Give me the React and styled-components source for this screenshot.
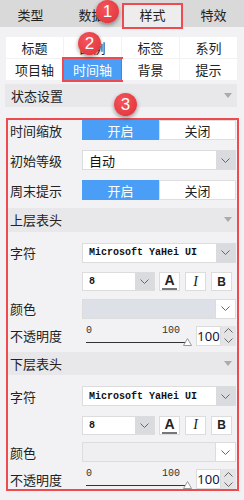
import React from 'react'
import styled, { createGlobalStyle } from 'styled-components'

const Global = createGlobalStyle`
  html, body {
    margin: 0;
    padding: 0;
    background: #f2f2f4;
  }
  body {
    font-family: "Noto Sans CJK SC", "Noto Sans", sans-serif;
    color: #222;
  }
`

const RED = '#ef4a4f'
const BLUE = '#4a9ef5'

const Page = styled.div`
  position: relative;
  width: 244px;
  height: 500px;
  overflow: hidden;
  background: #f2f2f4;
`

const TabBar = styled.div`
  display: grid;
  grid-template-columns: 61px 61px 61px 61px;
  height: 27px;
  background: #d9d9d9;
`

const Tab = styled.div`
  display: flex;
  align-items: center;
  justify-content: center;
  font-size: 13px;
  color: #222;
  box-sizing: border-box;
  ${p => p.$active && `
    margin-top: 3px;
    background: #ededed;
    border: 2px solid ${RED};
    padding-bottom: 3px;
  `}
`

const SubGrid = styled.div`
  display: grid;
  grid-template-columns: repeat(4, 57px);
  grid-auto-rows: 21px;
  gap: 1px;
  margin: 10px 0 0 6px;
  width: 231px;
`

const SubTab = styled.div`
  display: flex;
  align-items: center;
  justify-content: center;
  font-size: 13px;
  background: ${p => (p.$active ? BLUE : '#fff')};
  color: ${p => (p.$active ? '#fff' : '#222')};
  ${p => p.$active && `outline: 2px solid ${RED};`}
`

const Header = styled.div`
  display: flex;
  align-items: center;
  justify-content: space-between;
  height: ${p => p.$h || 24}px;
  margin-top: ${p => p.$mt || 0}px;
  padding: 0 5px 0 ${p => p.$pl || 2}px;
  background: #e8e8ea;
  font-size: 13px;
  color: #222;
`

const OuterHeader = styled(Header)`
  margin-left: 5px;
  margin-right: 7px;
`

const Caret = styled.span`
  width: 0;
  height: 0;
  border-left: 4px solid transparent;
  border-right: 4px solid transparent;
  border-top: 5px solid #ababab;
`

const Frame = styled.div`
  box-sizing: border-box;
  margin: 11px 0 0 6px;
  width: 233px;
  height: 373px;
  border: 2px solid ${RED};
  display: flex;
  flex-direction: column;
`

const Row = styled.div`
  display: flex;
  align-items: center;
  height: 20px;
  margin-top: ${p => p.$mt || 0}px;
  padding-right: 1px;
`

const Label = styled.div`
  width: 72px;
  padding-left: 2px;
  font-size: 13px;
  color: #222;
  white-space: nowrap;
`

const Toggle = styled.div`
  flex: 1;
  display: flex;
  height: 20px;
`

const ToggleHalf = styled.div`
  flex: 1;
  display: flex;
  align-items: center;
  justify-content: center;
  font-size: 13px;
  box-sizing: border-box;
  background: ${p => (p.$on ? BLUE : '#fff')};
  color: ${p => (p.$on ? '#fff' : '#222')};
  border: 1px solid ${p => (p.$on ? BLUE : '#dedede')};
`

const Select = styled.div`
  display: flex;
  box-sizing: border-box;
  width: ${p => (p.$w ? `${p.$w}px` : 'auto')};
  flex: ${p => (p.$w ? 'none' : 1)};
  height: ${p => p.$h || 20}px;
  border: 1px solid #dcdcdc;
  background: ${p => p.$bg || '#fff'};
`

const SelectText = styled.div`
  flex: 1;
  display: flex;
  align-items: center;
  padding-left: 6px;
  font-size: ${p => (p.$mono ? '10px' : '13px')};
  font-weight: ${p => (p.$mono ? 'bold' : 'normal')};
  font-family: ${p =>
    p.$mono ? '"Liberation Mono", "DejaVu Sans Mono", monospace' : 'inherit'};
  color: #111;
`

const ArrowBox = styled.div`
  width: 19px;
  display: flex;
  align-items: center;
  justify-content: center;
  background: ${p => p.$bg || '#d9dbdf'};
  border-left: ${p => (p.$line ? '1px solid #dcdcdc' : 'none')};
`

const Tools = styled.div`
  display: flex;
  align-items: center;
  margin-left: 74px;
`

const ToolButton = styled.div`
  box-sizing: border-box;
  width: 21px;
  height: 19px;
  margin-left: ${p => p.$ml}px;
  display: flex;
  flex-direction: column;
  align-items: center;
  justify-content: center;
  background: #fff;
  border: 1px solid #dcdcdc;
  font-family: ${p => p.$serif ? '"Liberation Serif", serif' : '"Liberation Sans", Arial, sans-serif'};
  font-weight: ${p => (p.$italic ? 'normal' : 'bold')};
  font-style: ${p => (p.$italic ? 'italic' : 'normal')};
  font-size: ${p => p.$fs || 13}px;
  color: #222;
  line-height: 1;
`

const ColorBar = styled.span`
  display: block;
  width: 15px;
  height: 3px;
  margin-top: 1px;
  background: #777;
`

const Slider = styled.div`
  position: relative;
  width: 106px;
  height: 20px;
  padding-left: 4px;
  display: flex;
  flex-direction: column;
  justify-content: space-between;
`

const Ticks = styled.div`
  display: flex;
  justify-content: space-between;
  padding-right: 12px;
  font-family: "Liberation Mono", "DejaVu Sans Mono", monospace;
  font-size: 10px;
  line-height: 10px;
  color: #333;
`

const Track = styled.div`
  height: 1px;
  margin: 0 5px 3px 0;
  background: #333;
`

const Thumb = styled.svg`
  position: absolute;
  right: 0;
  bottom: 0;
`

const Spinner = styled.div`
  display: flex;
  height: 20px;
  margin-left: 4px;
  flex: 1;
`

const SpinInput = styled.div`
  box-sizing: border-box;
  flex: 1;
  display: flex;
  align-items: center;
  justify-content: center;
  background: #fff;
  border: 1px solid #dcdcdc;
  font-family: "Noto Sans", sans-serif;
  font-size: 13px;
  color: #151535;
`

const SpinArrows = styled.div`
  width: 15px;
  display: flex;
  flex-direction: column;
  align-items: center;
  justify-content: space-around;
  background: #e4e4e6;
`

const Badge = styled.div`
  position: absolute;
  left: ${p => p.$x}px;
  top: ${p => p.$y}px;
  width: 23px;
  height: 23px;
  border-radius: 50%;
  background: radial-gradient(circle at 40% 35%, #f6545b, #dc3138);
  box-shadow: 0 2px 4px rgba(0, 0, 0, 0.4);
  color: #fff;
  font-family: "Liberation Sans", Arial, sans-serif;
  font-size: 17px;
  display: flex;
  align-items: center;
  justify-content: center;
`

const Chevron = ({ up }) => (
  <svg width="9" height="5" viewBox="0 0 9 5">
    <polyline
      points={up ? '0.5,4.5 4.5,0.5 8.5,4.5' : '0.5,0.5 4.5,4.5 8.5,0.5'}
      fill="none"
      stroke="#666"
      strokeWidth="1"
    />
  </svg>
)

const OnOff = ({ label, mt }) => (
  <Row $mt={mt}>
    <Label>{label}</Label>
    <Toggle>
      <ToggleHalf $on>开启</ToggleHalf>
      <ToggleHalf>关闭</ToggleHalf>
    </Toggle>
  </Row>
)

const FontBlock = ({ title, colorBg, top }) => (
  <>
    <Header $mt={top}>
      {title}
      <Caret />
    </Header>
    <Row $mt={11}>
      <Label>字符</Label>
      <Select>
        <SelectText $mono>Microsoft YaHei UI</SelectText>
        <ArrowBox><Chevron /></ArrowBox>
      </Select>
    </Row>
    <Row $mt={9}>
      <Tools>
        <Select $w={73} $h={19}>
          <SelectText $mono>8</SelectText>
          <ArrowBox><Chevron /></ArrowBox>
        </Select>
        <ToolButton $ml={4} $fs={14}>
          A
          <ColorBar />
        </ToolButton>
        <ToolButton $ml={5} $italic $serif $fs={14}>I</ToolButton>
        <ToolButton $ml={5} $fs={12}>B</ToolButton>
      </Tools>
    </Row>
    <Row $mt={7}>
      <Label>颜色</Label>
      <Select $bg={colorBg}>
        <SelectText />
        <ArrowBox $bg="#fff" $line><Chevron /></ArrowBox>
      </Select>
    </Row>
    <Row $mt={7}>
      <Label>不透明度</Label>
      <Slider>
        <Ticks>
          <span>0</span>
          <span>100</span>
        </Ticks>
        <Track />
        <Thumb width="9" height="8" viewBox="0 0 9 8">
          <polygon points="4.5,0.5 8.5,7.5 0.5,7.5" fill="#fff" stroke="#999" />
        </Thumb>
      </Slider>
      <Spinner>
        <SpinInput>100</SpinInput>
        <SpinArrows>
          <Chevron up />
          <Chevron />
        </SpinArrows>
      </Spinner>
    </Row>
  </>
)

const App = () => (
  <Page>
    <Global />
    <TabBar>
      <Tab>类型</Tab>
      <Tab>数据</Tab>
      <Tab $active>样式</Tab>
      <Tab>特效</Tab>
    </TabBar>

    <SubGrid>
      <SubTab>标题</SubTab>
      <SubTab>图例</SubTab>
      <SubTab>标签</SubTab>
      <SubTab>系列</SubTab>
      <SubTab>项目轴</SubTab>
      <SubTab $active>时间轴</SubTab>
      <SubTab>背景</SubTab>
      <SubTab>提示</SubTab>
    </SubGrid>

    <OuterHeader $mt={4} $h={23} $pl={6}>
      状态设置
      <Caret />
    </OuterHeader>

    <Frame>
      <OnOff label="时间缩放" mt={0} />
      <Row $mt={10}>
        <Label>初始等级</Label>
        <Select>
          <SelectText>自动</SelectText>
          <ArrowBox><Chevron /></ArrowBox>
        </Select>
      </Row>
      <OnOff label="周末提示" mt={10} />
      <FontBlock title="上层表头" colorBg="#dde1e7" top={8} />
      <FontBlock title="下层表头" colorBg="#efeff1" top={6} />
    </Frame>

    <Badge $x={96} $y={0}>1</Badge>
    <Badge $x={78} $y={32}>2</Badge>
    <Badge $x={114} $y={93}>3</Badge>
  </Page>
)

export default App
